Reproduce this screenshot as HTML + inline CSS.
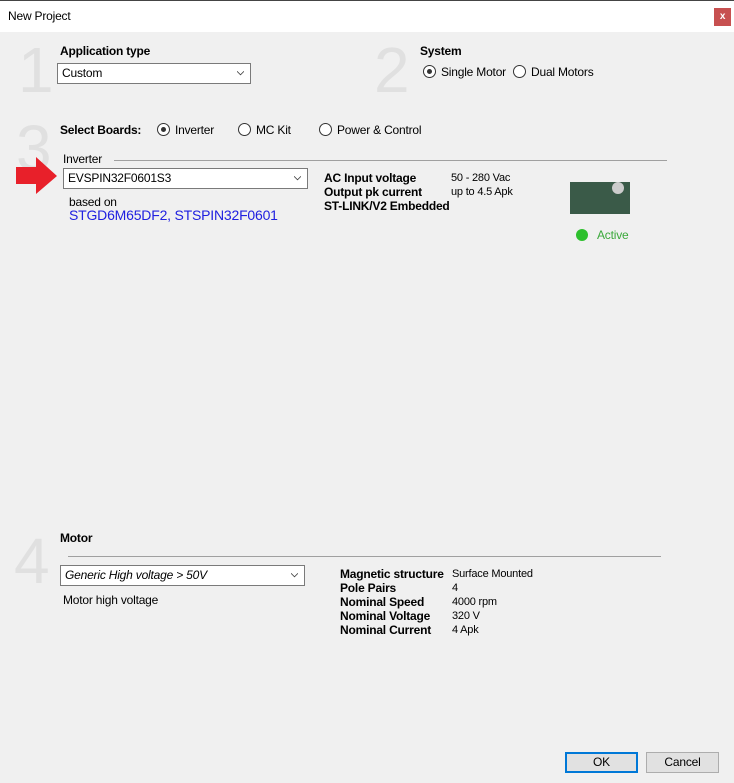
<!DOCTYPE html>
<html><head><style>
body{margin:0;width:734px;height:783px;background:#f0f0f0;font-family:"Liberation Sans",sans-serif;font-size:12px;color:#000;position:relative;overflow:hidden;letter-spacing:-0.2px}
.a{position:absolute;white-space:nowrap}
.big{position:absolute;font-size:64px;color:#e0e0e0;line-height:1;font-family:"Liberation Sans",sans-serif}
.b{font-weight:bold}
.combo{position:absolute;background:#fff;border:1px solid #7a7a7a;box-sizing:border-box;height:21px;padding:2px 4px;line-height:15px}
.chev{position:absolute;right:6px;top:6px;width:7px;height:7px}
.radio{display:inline-block;width:11px;height:11px;border:1px solid #333;border-radius:50%;background:#fff;vertical-align:-2px;margin-right:5px;position:relative}
.radio.on::after{content:"";position:absolute;left:3px;top:3px;width:5px;height:5px;border-radius:50%;background:#333}
.line{position:absolute;height:1px;background:#a0a0a0}
.btn{position:absolute;background:#e1e1e1;border:1px solid #adadad;box-sizing:border-box;text-align:center;line-height:19px}
</style></head><body>
<div class="a" style="left:0;top:0;width:734px;height:31px;background:#fff;border-top:1px solid #444"></div>
<div class="a" style="left:8px;top:9px;">New Project</div>
<div class="a" style="left:714px;top:8px;width:17px;height:18px;background:#c75050;color:#fff;font-size:10px;text-align:center;line-height:17px;font-weight:bold">x</div>

<div class="big" style="left:18px;top:38px">1</div>
<div class="a b" style="left:60px;top:44px">Application type</div>
<div class="combo" style="left:57px;top:63px;width:194px">Custom<svg class="chev" viewBox="0 0 8 5"><path d="M0 0L4 4L8 0" fill="none" stroke="#444"/></svg></div>

<div class="big" style="left:374px;top:38px">2</div>
<div class="a b" style="left:420px;top:44px">System</div>
<div class="a" style="left:423px;top:65px"><span class="radio on"></span>Single Motor</div>
<div class="a" style="left:513px;top:65px"><span class="radio"></span>Dual Motors</div>

<div class="big" style="left:16px;top:116px">3</div>
<div class="a b" style="left:60px;top:123px">Select Boards:</div>
<div class="a" style="left:157px;top:123px"><span class="radio on"></span>Inverter</div>
<div class="a" style="left:238px;top:123px"><span class="radio"></span>MC Kit</div>
<div class="a" style="left:319px;top:123px"><span class="radio"></span>Power &amp; Control</div>

<div class="a" style="left:63px;top:152px">Inverter</div>
<div class="line" style="left:114px;top:160px;width:553px"></div>
<svg class="a" style="left:16px;top:157px" width="42" height="38" viewBox="0 0 42 38"><path d="M0 10H20V0L41 19L20 37V27H0Z" fill="#e8202a"/></svg>
<div class="combo" style="left:63px;top:168px;width:245px">EVSPIN32F0601S3<svg class="chev" viewBox="0 0 8 5"><path d="M0 0L4 4L8 0" fill="none" stroke="#444"/></svg></div>
<div class="a" style="left:69px;top:195px">based on</div>
<div class="a" style="left:69px;top:207px;color:#2020e0;font-size:14px">STGD6M65DF2, STSPIN32F0601</div>

<div class="a b" style="left:324px;top:171px;line-height:14px">AC Input voltage<br>Output pk current<br>ST-LINK/V2 Embedded</div>
<div class="a" style="left:451px;top:171px;line-height:14px;font-size:11px">50 - 280 Vac<br>up to 4.5 Apk</div>
<div class="a" style="left:570px;top:182px;width:60px;height:32px;background:#3a5a48"></div>
<div class="a" style="left:612px;top:182px;width:12px;height:12px;border-radius:50%;background:#ccc"></div>
<div class="a" style="left:576px;top:229px;width:12px;height:12px;border-radius:50%;background:#2ec02e"></div>
<div class="a" style="left:597px;top:228px;color:#3aa83a">Active</div>

<div class="big" style="left:14px;top:529px">4</div>
<div class="a b" style="left:60px;top:531px">Motor</div>
<div class="line" style="left:68px;top:556px;width:593px"></div>
<div class="combo" style="left:60px;top:565px;width:245px;font-style:italic">Generic High voltage &gt; 50V<svg class="chev" viewBox="0 0 8 5"><path d="M0 0L4 4L8 0" fill="none" stroke="#444"/></svg></div>
<div class="a" style="left:63px;top:593px">Motor high voltage</div>
<div class="a b" style="left:340px;top:567px;line-height:14px">Magnetic structure<br>Pole Pairs<br>Nominal Speed<br>Nominal Voltage<br>Nominal Current</div>
<div class="a" style="left:452px;top:567px;line-height:14px;font-size:11px">Surface Mounted<br>4<br>4000 rpm<br>320 V<br>4 Apk</div>

<div class="btn" style="left:565px;top:752px;width:73px;height:21px;border:2px solid #0078d7;line-height:17px">OK</div>
<div class="btn" style="left:646px;top:752px;width:73px;height:21px">Cancel</div>
</body></html>
